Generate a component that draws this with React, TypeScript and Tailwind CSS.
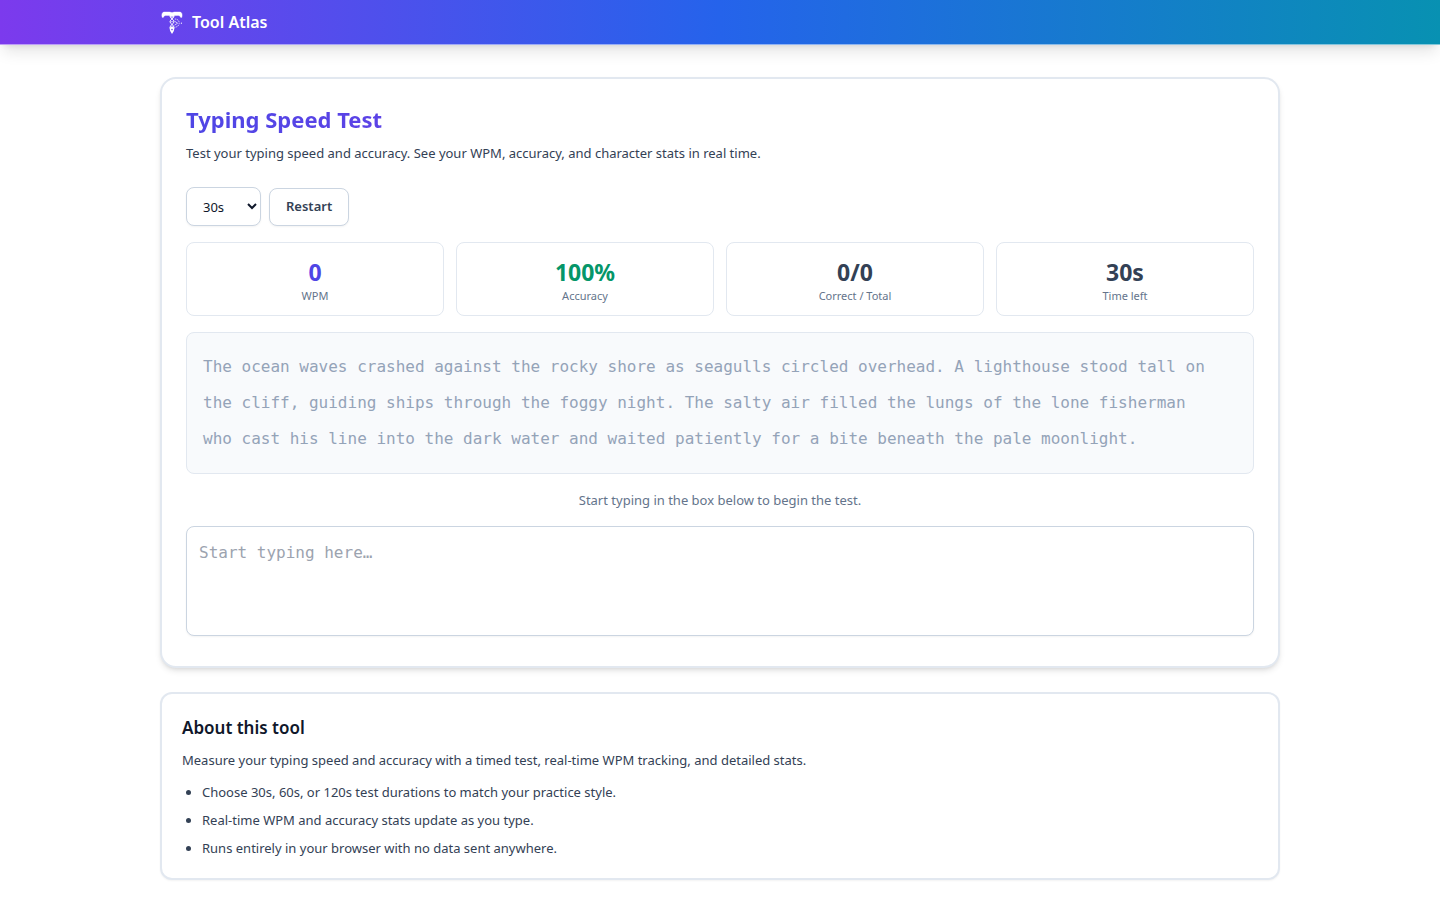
import { useEffect, useState } from "react";

const PASSAGE =
  "The ocean waves crashed against the rocky shore as seagulls circled overhead. A lighthouse stood tall on the cliff, guiding ships through the foggy night. The salty air filled the lungs of the lone fisherman who cast his line into the dark water and waited patiently for a bite beneath the pale moonlight.";

const DURATIONS = [30, 60, 120];

const FEATURES = [
  "Choose 30s, 60s, or 120s test durations to match your practice style.",
  "Real-time WPM and accuracy stats update as you type.",
  "Runs entirely in your browser with no data sent anywhere.",
];

function Logo() {
  return (
    <svg viewBox="0 0 24 24" className="h-6 w-6" fill="none" stroke="white" aria-hidden="true">
      {/* T crossbar */}
      <path
        d="M2.2 7.4C1.4 4.6 2 2 4.4 2H9.4C10.4 2 11 2.6 12 2.6S13.6 2 14.6 2H19.6C22 2 22.6 4.6 21.8 7.4L20.4 7.2C20.2 5.9 19.4 5.4 17.6 5.4H14.6L14 6.4H10L9.4 5.4H6.4C4.6 5.4 3.8 5.9 3.6 7.2Z"
        fill="white"
        strokeWidth="0.4"
      />
      {/* Double helix stem */}
      <path d="M10 6C10 8.8 14 9.2 14 11.7S10 14.5 10 17.5" strokeWidth="0.9" />
      <path d="M14 6C14 8.8 10 9.2 10 11.7S14 14.5 14 17.5" strokeWidth="0.9" />
      <path d="M10.4 7.4H13.6M10.2 11.7H13.8M10.4 16.2H13.6" strokeWidth="0.6" />
      {/* Pen nib */}
      <path d="M9.4 17.6L12 16.8L14.6 17.6L13.8 21L12 24L10.2 21Z" fill="white" stroke="none" />
      <circle cx="12" cy="19.6" r="0.8" fill="#6d45ea" stroke="none" />
      {/* Gear and compass */}
      <path d="M14.8 9C17.8 9 19.4 11 19.2 13.2C19 15.6 17.2 17.2 14.8 17.2" strokeWidth="0.7" strokeDasharray="1.4 0.7" />
      <path d="M14.6 11.2L17.6 13.2L14.6 15.2" strokeWidth="0.7" />
      <circle cx="21.4" cy="13.2" r="0.6" fill="white" stroke="none" />
    </svg>
  );
}

type StatProps = {
  value: string;
  label: string;
  color: string;
};

function Stat({ value, label, color }: StatProps) {
  return (
    <div className="rounded-lg border border-[#e2e8f0] bg-white px-3 pt-[13px] pb-[11px] text-center">
      <div className={`text-[23px] leading-8 font-bold ${color}`}>{value}</div>
      <div className="text-[11px] leading-4 text-[#64748b]">{label}</div>
    </div>
  );
}

export default function App() {
  const [duration, setDuration] = useState(30);
  const [timeLeft, setTimeLeft] = useState(30);
  const [typed, setTyped] = useState("");

  const running = typed.length > 0 && timeLeft > 0;

  useEffect(() => {
    if (!running) return;
    const timer = setInterval(() => setTimeLeft((t) => t - 1), 1000);
    return () => clearInterval(timer);
  }, [running]);

  const restart = (seconds: number) => {
    setDuration(seconds);
    setTimeLeft(seconds);
    setTyped("");
  };

  const correct = typed.split("").filter((char, i) => char === PASSAGE[i]).length;
  const elapsed = duration - timeLeft;
  const wpm = elapsed > 0 ? Math.round((correct / 5 / elapsed) * 60) : 0;
  const accuracy = typed.length > 0 ? Math.round((correct / typed.length) * 100) : 100;

  return (
    <div className="min-h-screen bg-white font-['Noto_Sans',sans-serif] text-[#0f172a]">
      <header className="border-b border-white/50 bg-[linear-gradient(to_right,#7c3aed,#2563eb,#0891b2)] shadow-lg">
        <div className="mx-auto flex h-11 max-w-[1120px] items-center">
          <a href="#" className="flex items-center gap-2 text-base font-semibold text-white">
            <Logo />
            Tool Atlas
          </a>
        </div>
      </header>

      <main className="mx-auto max-w-[1120px] py-8">
        <section className="rounded-2xl border-2 border-[#e2e8f0] bg-white p-6 shadow-md">
          <h1 className="bg-[linear-gradient(to_right,#4f46e5,#9333ea)] bg-clip-text text-[22px] leading-8 font-bold text-transparent">
            Typing Speed Test
          </h1>
          <p className="mt-2 text-[13px] leading-5 text-[#334155]">
            Test your typing speed and accuracy. See your WPM, accuracy, and character stats in real time.
          </p>

          <div className="mt-6 flex items-end gap-2">
            <select
              aria-label="Test duration"
              value={duration}
              onChange={(e) => restart(Number(e.target.value))}
              className="h-[39px] w-[75px] rounded-lg border border-[#cbd5e1] bg-white px-3 text-[13px] shadow-xs"
            >
              {DURATIONS.map((d) => (
                <option key={d} value={d}>
                  {d}s
                </option>
              ))}
            </select>
            <button
              type="button"
              onClick={() => restart(duration)}
              className="h-[38px] rounded-lg border border-[#cbd5e1] bg-white px-4 text-[13px] font-semibold text-[#334155] shadow-xs"
            >
              Restart
            </button>
          </div>

          <div className="mt-4 grid grid-cols-4 gap-3">
            <Stat value={`${wpm}`} label="WPM" color="text-[#4f46e5]" />
            <Stat value={`${accuracy}%`} label="Accuracy" color="text-[#059669]" />
            <Stat value={`${correct}/${typed.length}`} label="Correct / Total" color="text-[#334155]" />
            <Stat value={`${timeLeft}s`} label="Time left" color="text-[#334155]" />
          </div>

          <p className="mt-4 rounded-lg border border-[#e2e8f0] bg-[#f8fafc] py-4 pr-10 pl-4 font-['DejaVu_Sans_Mono',monospace] text-base leading-9 text-[#94a3b8]">
            {PASSAGE}
          </p>

          <p className="mt-4 text-center text-[13px] leading-5 text-[#64748b]">
            Start typing in the box below to begin the test.
          </p>

          <textarea
            rows={3}
            aria-label="Typing area"
            placeholder="Start typing here…"
            value={typed}
            disabled={timeLeft === 0}
            onChange={(e) => setTyped(e.target.value)}
            className="mt-4 mb-1.5 block w-full resize-none rounded-lg border border-[#cbd5e1] bg-white p-3 font-['DejaVu_Sans_Mono',monospace] text-base leading-7 shadow-xs placeholder:text-[#9ca3af]"
          />
        </section>

        <section className="mt-6 rounded-xl border-2 border-[#e2e8f0] bg-white p-5 shadow-xs">
          <h2 className="text-[17px] leading-7 font-semibold">About this tool</h2>
          <p className="mt-2 text-[13px] leading-5 text-[#334155]">
            Measure your typing speed and accuracy with a timed test, real-time WPM tracking, and detailed stats.
          </p>
          <ul className="mt-3 list-disc space-y-2 pl-5 text-[13px] leading-5 text-[#334155]">
            {FEATURES.map((feature) => (
              <li key={feature}>{feature}</li>
            ))}
          </ul>
        </section>
      </main>
    </div>
  );
}
